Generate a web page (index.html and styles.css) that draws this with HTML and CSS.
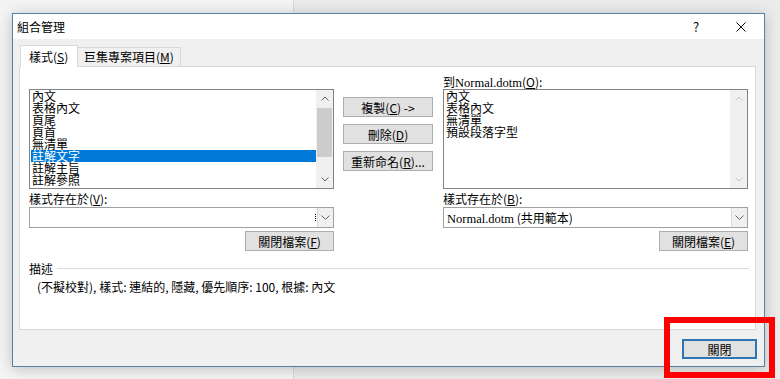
FILE: index.html
```html
<!DOCTYPE html>
<html lang="zh-Hant">
<head>
  <meta charset="UTF-8">
  <title>組合管理</title>
  <link rel="stylesheet" href="styles.css">
</head>
<body>
  <div class="dialog">
    <div class="titlebar">
      <span class="title">組合管理</span>
      <span class="help">?</span>
      <span class="close-x">
        <svg width="10" height="10" viewBox="0 0 10 10"><path d="M0.5 0.5L9.5 9.5M9.5 0.5L0.5 9.5" stroke="#000" stroke-width="1"/></svg>
      </span>
    </div>
    <div class="body">
      <div class="tabs">
        <div class="tab active">樣式(<u>S</u>)</div>
        <div class="tab">巨集專案項目(<u>M</u>)</div>
      </div>
      <div class="panel">
        <div class="columns">
          <div class="col side">
            <div class="label"></div>
            <div class="listbox">
              <ul class="items">
                <li>內文</li>
                <li>表格內文</li>
                <li>頁尾</li>
                <li>頁首</li>
                <li>無清單</li>
                <li class="selected">註解文字</li>
                <li>註解主旨</li>
                <li>註解參照</li>
              </ul>
              <div class="scrollbar">
                <div class="arrow"><svg width="8" height="5" viewBox="0 0 8 5"><path d="M0.5 4.5L4 1L7.5 4.5" fill="none" stroke="#606060"/></svg></div>
                <div class="track"><div class="thumb"></div></div>
                <div class="arrow"><svg width="8" height="5" viewBox="0 0 8 5"><path d="M0.5 0.5L4 4L7.5 0.5" fill="none" stroke="#606060"/></svg></div>
              </div>
            </div>
            <div class="label">樣式存在於(<u>V</u>):</div>
            <div class="combo">
              <span class="combo-text"></span>
              <span class="dots"></span>
              <span class="drop"><svg width="9" height="5" viewBox="0 0 9 5"><path d="M0.5 0.5L4.5 4.5L8.5 0.5" fill="none" stroke="#606060"/></svg></span>
            </div>
            <div class="btn-row"><button class="btn wide">關閉檔案(<u>F</u>)</button></div>
          </div>
          <div class="col middle">
            <button class="btn">複製(<u>C</u>) -&gt;</button>
            <button class="btn">刪除(<u>D</u>)</button>
            <button class="btn">重新命名(<u>R</u>)...</button>
          </div>
          <div class="col side">
            <div class="label">到<span class="roman">Normal.dotm</span>(<u>O</u>):</div>
            <div class="listbox">
              <ul class="items">
                <li>內文</li>
                <li>表格內文</li>
                <li>無清單</li>
                <li>預設段落字型</li>
              </ul>
              <div class="scrollbar disabled">
                <div class="arrow"><svg width="8" height="5" viewBox="0 0 8 5"><path d="M0.5 4.5L4 1L7.5 4.5" fill="none" stroke="#c4c4c4"/></svg></div>
                <div class="track"></div>
                <div class="arrow"><svg width="8" height="5" viewBox="0 0 8 5"><path d="M0.5 0.5L4 4L7.5 0.5" fill="none" stroke="#c4c4c4"/></svg></div>
              </div>
            </div>
            <div class="label">樣式存在於(<u>B</u>):</div>
            <div class="combo">
              <span class="combo-text"><span class="roman">Normal.dotm</span> (共用範本)</span>
              <span class="drop"><svg width="9" height="5" viewBox="0 0 9 5"><path d="M0.5 0.5L4.5 4.5L8.5 0.5" fill="none" stroke="#606060"/></svg></span>
            </div>
            <div class="btn-row"><button class="btn wide">關閉檔案(<u>E</u>)</button></div>
          </div>
        </div>
        <div class="desc-head"><span>描述</span><span class="rule"></span></div>
        <div class="desc-text">(不擬校對), 樣式: 連結的, 隱藏, 優先順序: 100, 根據: 內文</div>
      </div>
      <div class="footer">
        <button class="btn default">關閉</button>
      </div>
    </div>
  </div>
  <div class="marker"></div>
</body>
</html>
```

FILE: styles.css
```css
body {
  margin: 0;
  padding: 13px 0 0 12px;
  height: 379px;
  box-sizing: border-box;
  overflow: hidden;
  font-family: "Noto Sans CJK TC", "Noto Sans", sans-serif;
  font-size: 12px;
  color: #000;
  background: linear-gradient(90deg, #f4f4f4 0, #f4f4f4 293px, #d9d9d9 293px, #d9d9d9 294px, #ececec 294px);
}
.dialog {
  width: 753px;
  box-sizing: border-box;
  border: 1px solid #587fa8;
  background: #f0f0f0;
  box-shadow: 0 2px 14px rgba(0,0,0,0.22);
}
.titlebar {
  display: flex;
  align-items: center;
  height: 25px;
  background: #fff;
  padding: 0 18px 0 4px;
}
.title {
  flex: 1;
  line-height: 25px;
}
.help {
  width: 12px;
  text-align: center;
  font-size: 13px;
  margin-right: 34px;
}
.close-x {
  display: flex;
  width: 10px;
  height: 10px;
}
.body {
  padding: 6px 8px 7px 6px;
}
.tabs {
  display: flex;
  align-items: flex-start;
  padding-left: 1px;
  margin-bottom: -1px;
  position: relative;
  z-index: 1;
  height: 22px;
}
.tab {
  box-sizing: border-box;
  height: 19px;
  margin-top: 2px;
  padding: 0 6px;
  border: 1px solid #d9d9d9;
  border-bottom: none;
  border-left: none;
  background: #f0f0f0;
  line-height: 18px;
}
.tab.active {
  height: 22px;
  margin-top: 0;
  width: 58px;
  padding-left: 8px;
  border-left: 1px solid #d9d9d9;
  background: #fff;
  line-height: 21px;
}
.tab u, .label u, .btn u {
  text-underline-offset: 1px;
}
.panel {
  background: #fff;
  border: 1px solid #d9d9d9;
  height: 264px;
  box-sizing: border-box;
  padding: 7px 0 0 9px;
}
.columns {
  display: flex;
}
.col.side {
  width: 305px;
  display: flex;
  flex-direction: column;
}
.col.middle {
  width: 90px;
  margin: 0 10px 0 9px;
  padding-top: 23px;
  display: flex;
  flex-direction: column;
  gap: 7px;
}
.label {
  height: 15px;
  line-height: 15px;
  white-space: nowrap;
}
.col.side .label + .combo {
  margin-top: 1px;
}
.col.side .listbox + .label {
  margin-top: 2px;
}
.roman {
  font-family: "Liberation Serif", serif;
  font-size: 12.5px;
}
.listbox {
  display: flex;
  height: 100px;
  box-sizing: border-box;
  border: 1px solid #828282;
  background: #fff;
}
.items {
  list-style: none;
  margin: 0;
  padding: 0 0 0 1px;
  flex: 1;
}
.items li {
  height: 12px;
  line-height: 12px;
  padding-left: 1px;
  white-space: nowrap;
}
.items li.selected {
  background: #0078d7;
  color: #fff;
}
.scrollbar {
  width: 17px;
  display: flex;
  flex-direction: column;
  background: #f0f0f0;
}
.scrollbar .arrow {
  height: 17px;
  display: flex;
  align-items: center;
  justify-content: center;
}
.scrollbar .track {
  flex: 1;
  padding: 1px 1px;
}
.scrollbar .thumb {
  height: 49px;
  background: #cdcdcd;
}
.combo {
  display: flex;
  align-items: center;
  height: 21px;
  box-sizing: border-box;
  border: 1px solid #a0a0a0;
  background: #fff;
}
.combo-text {
  flex: 1;
  padding-left: 3px;
  white-space: nowrap;
}
.dots {
  width: 0;
  height: 7px;
  border-left: 1px dotted #000;
  margin-right: 1px;
}
.drop {
  width: 16px;
  height: 19px;
  box-sizing: border-box;
  border-left: 1px solid #d9d9d9;
  background: #f0f0f0;
  display: flex;
  align-items: center;
  justify-content: center;
}
.btn-row {
  display: flex;
  justify-content: flex-end;
  margin-top: 3px;
}
.btn {
  font-family: inherit;
  font-size: 12px;
  color: #000;
  height: 20px;
  padding: 0;
  border: 1px solid #adadad;
  background: #e1e1e1;
  line-height: 17px;
  white-space: nowrap;
}
.btn.wide {
  width: 89px;
}
.desc-head {
  display: flex;
  align-items: center;
  margin-top: 10px;
  height: 15px;
}
.desc-head .rule {
  flex: 1;
  margin: 0 6px 0 4px;
  border-top: 1px solid #dcdcdc;
}
.desc-text {
  margin-top: 3px;
  padding-left: 8px;
  line-height: 15px;
}
.footer {
  display: flex;
  justify-content: flex-end;
  margin-top: 9px;
  margin-right: -1px;
}
.btn.default {
  width: 75px;
  border: 2px solid #2e76b3;
  line-height: 15px;
}
.marker {
  position: absolute;
  left: 664px;
  top: 317px;
  width: 111px;
  height: 61px;
  box-sizing: border-box;
  border: 6px solid #f00;
}
```
